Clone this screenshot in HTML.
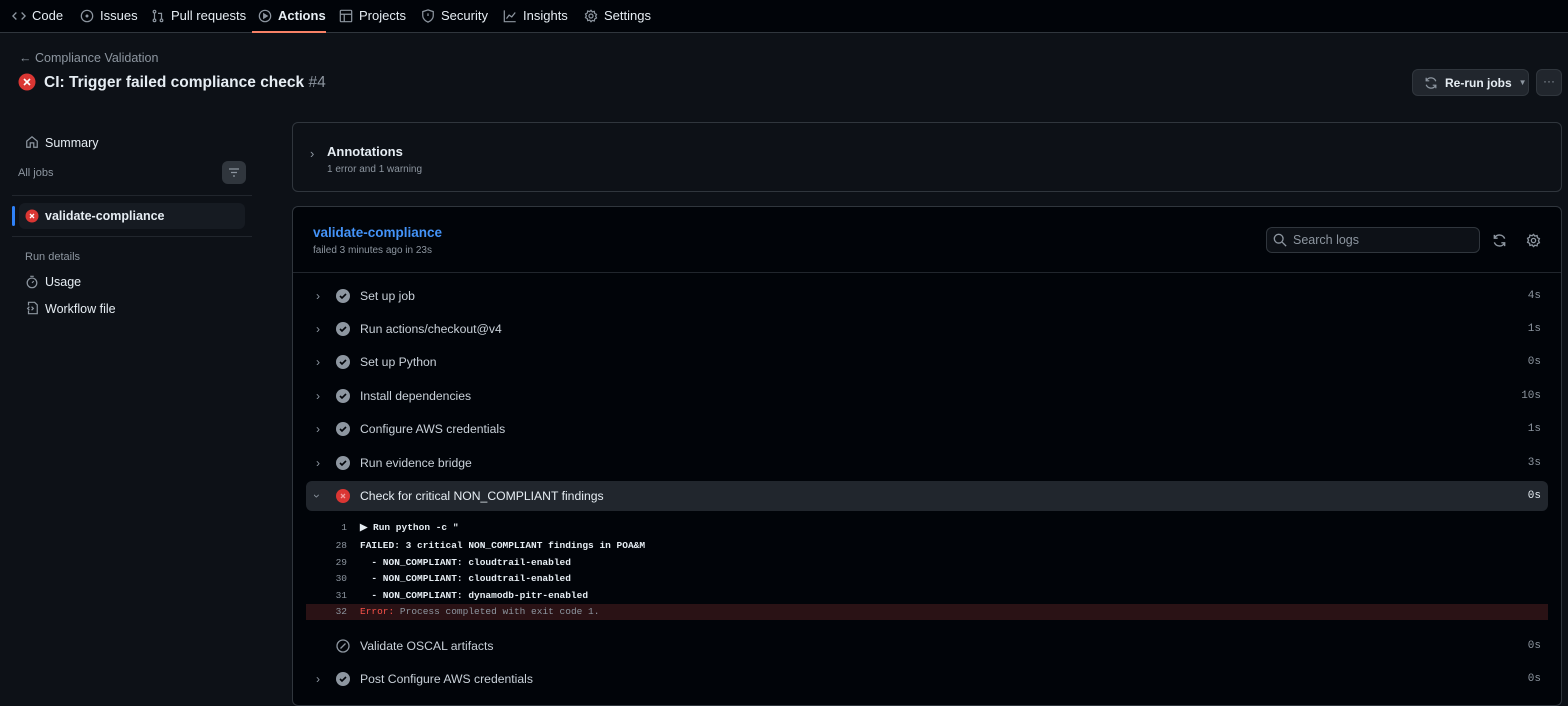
<!DOCTYPE html><html><head><style>
*{box-sizing:border-box;margin:0;padding:0}
body{width:1568px;height:699px;overflow:hidden;background:#0d1117;color:#e6edf3;font-family:"Liberation Sans",sans-serif;font-size:13px;position:relative}
.a{position:absolute}
.nav{left:0;top:0;width:1568px;height:33px;background:#010409;border-bottom:1px solid #30363d}
.ni{position:absolute;top:8px;font-size:13px;color:#e6edf3;display:flex;align-items:center;gap:6px}
.ni svg{width:14px;height:14px}
.muted{color:#8d96a0}
.step{position:absolute;left:306px;width:1242px;height:30px;display:flex;align-items:center;font-size:12.2px;color:#c9d1d9}
.step .ch{position:absolute;left:10px;color:#8d96a0}
.step .ic{position:absolute;left:30px;top:8px}
.step .tx{position:absolute;left:54px}
.step .d{position:absolute;right:7px;font-family:"Liberation Mono",monospace;font-size:11px;color:#8d96a0}
.log{position:absolute;left:306px;width:1242px;height:16px;font-family:"Liberation Mono",monospace;font-size:9.5px;font-weight:bold;color:#e6edf3;line-height:16px}
.log .n{position:absolute;left:0;width:41px;text-align:right;color:#8d96a0;font-weight:normal}
.log .t{position:absolute;left:54px;white-space:pre}
</style></head><body>
<div class="a nav">
<div class="ni" style="left:12px"><svg viewBox="0 0 16 16" fill="none" stroke="#8d96a0" stroke-width="1.5"><path d="M5 4L1 8l4 4M11 4l4 4-4 4"/></svg>Code</div>
<div class="ni" style="left:80px"><svg viewBox="0 0 16 16" fill="none" stroke="#8d96a0" stroke-width="1.4"><circle cx="8" cy="8" r="6.5"/><circle cx="8" cy="8" r="1" fill="#8d96a0"/></svg>Issues</div>
<div class="ni" style="left:151px"><svg viewBox="0 0 16 16" fill="none" stroke="#8d96a0" stroke-width="1.4"><circle cx="4" cy="3" r="1.5"/><circle cx="4" cy="13" r="1.5"/><circle cx="12" cy="13" r="1.5"/><path d="M4 4.5v7M12 11.5V5H8"/></svg>Pull requests</div>
<div class="ni" style="left:258px;font-weight:bold"><svg viewBox="0 0 16 16" fill="none" stroke="#8d96a0" stroke-width="1.4"><circle cx="8" cy="8" r="6.5"/><path d="M6.5 5.5v5l4-2.5z" fill="#8d96a0"/></svg>Actions</div>
<div class="a" style="left:252px;top:31px;width:74px;height:2px;background:#f78166"></div>
<div class="ni" style="left:339px"><svg viewBox="0 0 16 16" fill="none" stroke="#8d96a0" stroke-width="1.4"><rect x="1.5" y="1.5" width="13" height="13" rx="1"/><path d="M1.5 6h13M6 6v8.5"/></svg>Projects</div>
<div class="ni" style="left:421px"><svg viewBox="0 0 16 16" fill="none" stroke="#8d96a0" stroke-width="1.4"><path d="M8 1l6 2v5c0 3-3 6-6 7-3-1-6-4-6-7V3z"/><path d="M8 5v3"/></svg>Security</div>
<div class="ni" style="left:503px"><svg viewBox="0 0 16 16" fill="none" stroke="#8d96a0" stroke-width="1.4"><path d="M1.5 1.5v13h13M4 11l3-4 3 2 4-5"/></svg>Insights</div>
<div class="ni" style="left:584px"><svg viewBox="0 0 16 16" fill="none" stroke="#8d96a0" stroke-width="1.4"><circle cx="8" cy="8" r="2.3"/><path d="M8 1.5l1.5 1.8 2.3-.6.4 2.3 2.1 1.1-1 2.1 1 2.1-2.1 1.1-.4 2.3-2.3-.6L8 14.5l-1.5-1.8-2.3.6-.4-2.3-2.1-1.1 1-2.1-1-2.1 2.1-1.1.4-2.3 2.3.6z"/></svg>Settings</div>
</div>
<div class="a muted" style="left:19px;top:51px;font-size:12.5px">← Compliance Validation</div>
<svg class="a" style="left:18px;top:73px" width="18" height="18"><circle cx="9" cy="9" r="8.5" fill="#da3633"/><path d="M6 6l6 6M12 6l-6 6" stroke="#fff" stroke-width="1.6"/></svg>
<div class="a" style="left:44px;top:74px;font-size:15.5px;font-weight:bold">CI: Trigger failed compliance check <span class="muted" style="font-weight:normal">#4</span></div>
<div class="a" style="left:1412px;top:69px;width:117px;height:27px;background:#21262d;border:1px solid #30363d;border-radius:6px;font-size:12px;font-weight:bold;display:flex;align-items:center;padding-left:11px;gap:7px"><svg width="14" height="14" viewBox="0 0 16 16" fill="none" stroke="#8d96a0" stroke-width="1.4"><path d="M13.5 6A6 6 0 0 0 2.8 5M2.5 10a6 6 0 0 0 10.7 1M2.5 2v3.5H6M13.5 14v-3.5H10"/></svg>Re-run jobs <span class="muted" style="font-size:8px">▼</span></div>
<div class="a" style="left:1536px;top:69px;width:26px;height:27px;background:#21262d;border:1px solid #30363d;border-radius:6px;color:#8d96a0;text-align:center;line-height:22px;font-size:12px">···</div>
<svg class="a" style="left:25px;top:135px" width="14" height="14" viewBox="0 0 16 16" fill="none" stroke="#8d96a0" stroke-width="1.4"><path d="M2 7l6-5 6 5v7H10V9H6v5H2z"/></svg>
<div class="a" style="left:45px;top:136px;font-size:12.5px">Summary</div>
<div class="a muted" style="left:18px;top:167px;font-size:11px">All jobs</div>
<div class="a" style="left:222px;top:161px;width:24px;height:23px;background:#30363d;border-radius:6px"><svg width="24" height="23" viewBox="0 0 24 23" stroke="#8d96a0" stroke-width="1.3"><path d="M7 8h10M9 11.5h6M11 15h2"/></svg></div>
<div class="a" style="left:12px;top:195px;width:240px;height:1px;background:#21262d"></div>
<div class="a" style="left:12px;top:206px;width:3px;height:20px;background:#2f81f7;border-radius:2px"></div>
<div class="a" style="left:19px;top:203px;width:226px;height:26px;background:#161b22;border-radius:6px"></div>
<svg class="a" style="left:25px;top:209px" width="14" height="14"><circle cx="7" cy="7" r="6.5" fill="#da3633"/><path d="M5 5l4 4M9 5l-4 4" stroke="#fff" stroke-width="1.3"/></svg>
<div class="a" style="left:45px;top:209px;font-size:12.5px;font-weight:bold">validate-compliance</div>
<div class="a" style="left:12px;top:236px;width:240px;height:1px;background:#21262d"></div>
<div class="a muted" style="left:25px;top:251px;font-size:11px">Run details</div>
<svg class="a" style="left:25px;top:275px" width="14" height="14" viewBox="0 0 16 16" fill="none" stroke="#8d96a0" stroke-width="1.4"><circle cx="8" cy="9" r="5.5"/><path d="M6 1.5h4M8 9l2-2"/></svg>
<div class="a" style="left:45px;top:275px;font-size:12.5px">Usage</div>
<svg class="a" style="left:25px;top:301px" width="14" height="14" viewBox="0 0 16 16" fill="none" stroke="#8d96a0" stroke-width="1.4"><path d="M4 5V1.5h7l3 3v10H4V11M5 6.5L3 8.5l2 2M7.5 6.5l2 2-2 2"/></svg>
<div class="a" style="left:45px;top:302px;font-size:12.5px">Workflow file</div>
<div class="a" style="left:292px;top:122px;width:1270px;height:70px;border:1px solid #30363d;border-radius:6px"></div>
<div class="a muted" style="left:310px;top:146px;font-size:13px">›</div>
<div class="a" style="left:327px;top:144px;font-size:13px;font-weight:bold">Annotations</div>
<div class="a muted" style="left:327px;top:164px;font-size:10px">1 error and 1 warning</div>
<div class="a" style="left:292px;top:206px;width:1270px;height:500px;border:1px solid #30363d;border-radius:6px;background:#010409"></div>
<div class="a" style="left:293px;top:272px;width:1268px;height:1px;background:#21262d"></div>
<div class="a" style="left:313px;top:225px;font-size:13.5px;font-weight:bold;color:#4493f8">validate-compliance</div>
<div class="a muted" style="left:313px;top:245px;font-size:10px">failed 3 minutes ago in 23s</div>
<div class="a" style="left:1266px;top:227px;width:214px;height:26px;border:1px solid #30363d;border-radius:6px;background:#0d1117"></div>
<svg class="a" style="left:1273px;top:233px" width="14" height="14" viewBox="0 0 16 16" fill="none" stroke="#8d96a0" stroke-width="1.5"><circle cx="6.5" cy="6.5" r="5"/><path d="M10.5 10.5L15 15"/></svg>
<div class="a muted" style="left:1293px;top:233px;font-size:12.5px">Search logs</div>
<svg class="a" style="left:1492px;top:233px" width="15" height="15" viewBox="0 0 16 16" fill="none" stroke="#8d96a0" stroke-width="1.5"><path d="M13.5 6A6 6 0 0 0 2.8 5M2.5 10a6 6 0 0 0 10.7 1M2.5 2v3.5H6M13.5 14v-3.5H10"/></svg>
<svg class="a" style="left:1526px;top:233px" width="15" height="15" viewBox="0 0 16 16" fill="none" stroke="#8d96a0" stroke-width="1.4"><circle cx="8" cy="8" r="2.3"/><path d="M8 1.5l1.5 1.8 2.3-.6.4 2.3 2.1 1.1-1 2.1 1 2.1-2.1 1.1-.4 2.3-2.3-.6L8 14.5l-1.5-1.8-2.3.6-.4-2.3-2.1-1.1 1-2.1-1-2.1 2.1-1.1.4-2.3 2.3.6z"/></svg>

<div class="step" style="top:281px"><span class="ch">›</span><svg class="ic" width="14" height="14"><circle cx="7" cy="7" r="7" fill="#8d96a0"/><path d="M4 7l2 2 4-4" stroke="#010409" stroke-width="1.6" fill="none"/></svg><span class="tx">Set up job</span><span class="d">4s</span></div>
<div class="step" style="top:314px"><span class="ch">›</span><svg class="ic" width="14" height="14"><circle cx="7" cy="7" r="7" fill="#8d96a0"/><path d="M4 7l2 2 4-4" stroke="#010409" stroke-width="1.6" fill="none"/></svg><span class="tx">Run actions/checkout@v4</span><span class="d">1s</span></div>
<div class="step" style="top:347px"><span class="ch">›</span><svg class="ic" width="14" height="14"><circle cx="7" cy="7" r="7" fill="#8d96a0"/><path d="M4 7l2 2 4-4" stroke="#010409" stroke-width="1.6" fill="none"/></svg><span class="tx">Set up Python</span><span class="d">0s</span></div>
<div class="step" style="top:381px"><span class="ch">›</span><svg class="ic" width="14" height="14"><circle cx="7" cy="7" r="7" fill="#8d96a0"/><path d="M4 7l2 2 4-4" stroke="#010409" stroke-width="1.6" fill="none"/></svg><span class="tx">Install dependencies</span><span class="d">10s</span></div>
<div class="step" style="top:414px"><span class="ch">›</span><svg class="ic" width="14" height="14"><circle cx="7" cy="7" r="7" fill="#8d96a0"/><path d="M4 7l2 2 4-4" stroke="#010409" stroke-width="1.6" fill="none"/></svg><span class="tx">Configure AWS credentials</span><span class="d">1s</span></div>
<div class="step" style="top:448px"><span class="ch">›</span><svg class="ic" width="14" height="14"><circle cx="7" cy="7" r="7" fill="#8d96a0"/><path d="M4 7l2 2 4-4" stroke="#010409" stroke-width="1.6" fill="none"/></svg><span class="tx">Run evidence bridge</span><span class="d">3s</span></div>
<div class="step" style="top:481px;background:#21262d;border-radius:6px;color:#e6edf3"><span class="ch" style="left:9px;transform:rotate(90deg)">›</span><svg class="ic" width="14" height="14"><circle cx="7" cy="7" r="7" fill="#da3633"/><path d="M5 5l4 4M9 5l-4 4" stroke="#f0a0a0" stroke-width="1.3"/></svg><span class="tx">Check for critical NON_COMPLIANT findings</span><span class="d" style="color:#e6edf3">0s</span></div>
<div class="log" style="top:520px"><span class="n">1</span><span class="t">▶ Run python -c "</span></div>
<div class="log" style="top:538px"><span class="n">28</span><span class="t">FAILED: 3 critical NON_COMPLIANT findings in POA&amp;M</span></div>
<div class="log" style="top:555px"><span class="n">29</span><span class="t">  - NON_COMPLIANT: cloudtrail-enabled</span></div>
<div class="log" style="top:571px"><span class="n">30</span><span class="t">  - NON_COMPLIANT: cloudtrail-enabled</span></div>
<div class="log" style="top:588px"><span class="n">31</span><span class="t">  - NON_COMPLIANT: dynamodb-pitr-enabled</span></div>
<div class="log" style="top:604px;background:#2a1215"><span class="n">32</span><span class="t" style="font-weight:normal;color:#8d96a0"><span style="color:#f85149">Error:</span> Process completed with exit code 1.</span></div>
<div class="step" style="top:631px"><svg class="ic" width="14" height="14" viewBox="0 0 14 14" fill="none" stroke="#8d96a0" stroke-width="1.3"><circle cx="7" cy="7" r="6"/><path d="M4.5 9.5l5-5"/></svg><span class="tx">Validate OSCAL artifacts</span><span class="d">0s</span></div>
<div class="step" style="top:664px"><span class="ch">›</span><svg class="ic" width="14" height="14"><circle cx="7" cy="7" r="7" fill="#8d96a0"/><path d="M4 7l2 2 4-4" stroke="#010409" stroke-width="1.6" fill="none"/></svg><span class="tx">Post Configure AWS credentials</span><span class="d">0s</span></div>
</body></html>
